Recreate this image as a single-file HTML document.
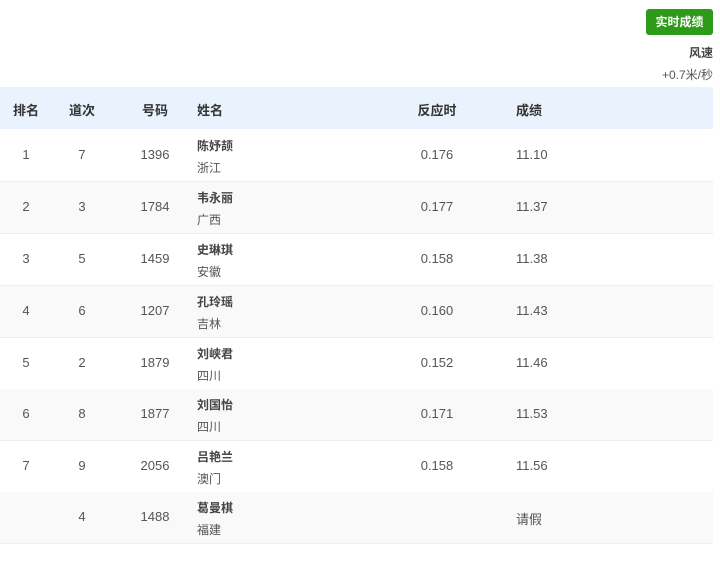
<!DOCTYPE html><html><head><meta charset="utf-8"><style>
body{margin:0;width:720px;height:561px;background:#fff;font-family:"Liberation Sans","Noto Sans CJK SC",sans-serif;color:#555;font-size:13px;position:relative;overflow:hidden}
.btn{position:absolute;left:646px;top:9px;width:67px;height:26px;background:#2e9a1a;color:#fff;font-weight:bold;font-size:12px;line-height:26px;text-align:center;border-radius:3px}
.ws{position:absolute;right:7px;text-align:right;font-size:12px}
.row{position:absolute;left:0;width:713px;height:51px;border-bottom:1px solid #eee}
.row div{position:absolute}
.hd{top:87px;height:42px;background:#eaf3fd;font-weight:bold;color:#333;font-size:13px;border:none}
.hd div{top:13px}
.c1{width:52px;text-align:center}
.c2{left:57px;width:50px;text-align:center}
.c3{left:130px;width:50px;text-align:center}
.c4{left:197px;font-size:12px}
.c5{left:407px;width:60px;text-align:center}
.c6{left:516px}
.n{top:7px;font-weight:bold;color:#444}
.p{top:29px}
.m{top:17px}
.alt{background:#f9f9f9}
</style></head><body>
<div class="btn">实时成绩</div>
<div class="ws" style="top:44px;font-weight:bold;color:#444">风速</div>
<div class="ws" style="top:66px">+0.7米/秒</div>
<div class="row hd"><div class="c1">排名</div><div class="c2">道次</div><div class="c3">号码</div><div class="c4" style="font-size:13px">姓名</div><div class="c5">反应时</div><div class="c6">成绩</div></div>
<div class="row" style="top:130px"><div class="c1 m">1</div><div class="c2 m">7</div><div class="c3 m">1396</div><div class="c4 n">陈妤颉</div><div class="c4 p">浙江</div><div class="c5 m">0.176</div><div class="c6 m">11.10</div></div>
<div class="row alt" style="top:182px"><div class="c1 m">2</div><div class="c2 m">3</div><div class="c3 m">1784</div><div class="c4 n">韦永丽</div><div class="c4 p">广西</div><div class="c5 m">0.177</div><div class="c6 m">11.37</div></div>
<div class="row" style="top:234px"><div class="c1 m">3</div><div class="c2 m">5</div><div class="c3 m">1459</div><div class="c4 n">史琳琪</div><div class="c4 p">安徽</div><div class="c5 m">0.158</div><div class="c6 m">11.38</div></div>
<div class="row alt" style="top:286px"><div class="c1 m">4</div><div class="c2 m">6</div><div class="c3 m">1207</div><div class="c4 n">孔玲瑶</div><div class="c4 p">吉林</div><div class="c5 m">0.160</div><div class="c6 m">11.43</div></div>
<div class="row" style="top:338px"><div class="c1 m">5</div><div class="c2 m">2</div><div class="c3 m">1879</div><div class="c4 n">刘峡君</div><div class="c4 p">四川</div><div class="c5 m">0.152</div><div class="c6 m">11.46</div></div>
<div class="row alt" style="top:389px"><div class="c1 m">6</div><div class="c2 m">8</div><div class="c3 m">1877</div><div class="c4 n">刘国怡</div><div class="c4 p">四川</div><div class="c5 m">0.171</div><div class="c6 m">11.53</div></div>
<div class="row" style="top:441px"><div class="c1 m">7</div><div class="c2 m">9</div><div class="c3 m">2056</div><div class="c4 n">吕艳兰</div><div class="c4 p">澳门</div><div class="c5 m">0.158</div><div class="c6 m">11.56</div></div>
<div class="row alt" style="top:492px"><div class="c2 m">4</div><div class="c3 m">1488</div><div class="c4 n">葛曼棋</div><div class="c4 p">福建</div><div class="c6 m">请假</div></div>
</body></html>
